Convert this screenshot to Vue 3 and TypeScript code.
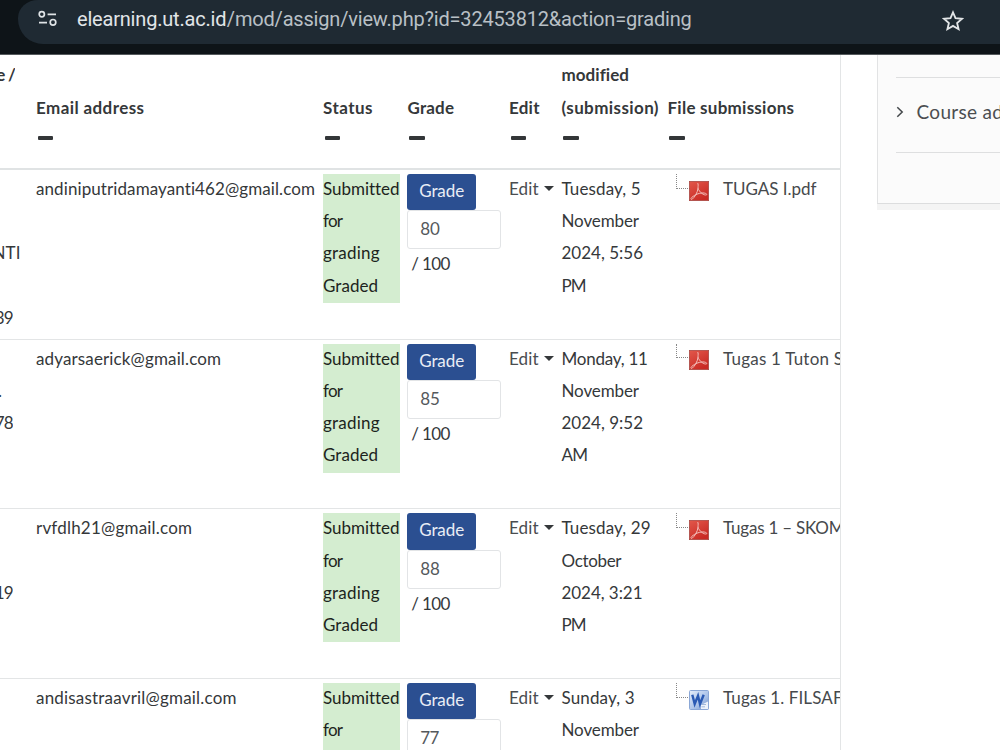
<script setup lang="ts">
import type { Directive } from 'vue'

interface Label {
  t: string
  w: number
}
interface Row {
  name: (Label & { right: number })[]
  email: Label
  grade: Label
  date: Label[]
  icon: 'pdf' | 'word'
  file: Label
}

const L = (t: string, w: number): Label => ({ t, w })
const N = (t: string, w: number, right: number) => ({ t, w, right })

const applyFit = (el: HTMLElement, w: number) => {
  el.style.letterSpacing = '0px'
  const natural = el.getBoundingClientRect().width
  const count = (el.textContent ?? '').length
  if (natural > 0 && count > 1) el.style.letterSpacing = `${(w - natural) / (count - 1)}px`
}
const vFit: Directive<HTMLElement, number> = {
  mounted: (el, binding) => applyFit(el, binding.value),
}

const headers: { lines: Label[] }[] = [
  { lines: [L('', 0), L('Email address', 108)] },
  { lines: [L('', 0), L('Status', 49.5)] },
  { lines: [L('', 0), L('Grade', 46.5)] },
  { lines: [L('', 0), L('Edit', 30.5)] },
  { lines: [L('modified', 67.5), L('(submission)', 97)] },
  { lines: [L('', 0), L('File submissions', 126.5)] },
]

const status: Label[] = [L('Submitted', 76.5), L('for', 20), L('grading', 56.5), L('Graded', 55)]

const rows: Row[] = [
  {
    name: [N('', 0, 0), N('', 0, 0), N('NTI', 28, 20.5), N('', 0, 0), N('39', 19, 13)],
    email: L('andiniputridamayanti462@gmail.com', 279),
    grade: L('80', 19.5),
    date: [L('Tuesday, 5', 79), L('November', 77.5), L('2024, 5:56', 81.5), L('PM', 25)],
    icon: 'pdf',
    file: L('TUGAS I.pdf', 93.5),
  },
  {
    name: [N('', 0, 0), N('.', 4, 2), N('78', 19, 13)],
    email: L('adyarsaerick@gmail.com', 185),
    grade: L('85', 19.5),
    date: [L('Monday, 11', 86.5), L('November', 77.5), L('2024, 9:52', 81.5), L('AM', 26.5)],
    icon: 'pdf',
    file: L('Tugas 1 Tuton S', 120),
  },
  {
    name: [N('', 0, 0), N('', 0, 0), N('19', 19, 13)],
    email: L('rvfdlh21@gmail.com', 156),
    grade: L('88', 19.5),
    date: [L('Tuesday, 29', 89), L('October', 60), L('2024, 3:21', 81), L('PM', 25)],
    icon: 'pdf',
    file: L('Tugas 1 – SKOM', 121.5),
  },
  {
    name: [],
    email: L('andisastraavril@gmail.com', 200.5),
    grade: L('77', 19),
    date: [L('Sunday, 3', 73), L('November', 77.5)],
    icon: 'word',
    file: L('Tugas 1. FILSAF', 119.5),
  },
]
</script>

<template>
  <div class="screen">
    <header class="browser">
      <div class="pill">
        <svg class="tune" width="20" height="18" viewBox="0 0 20 18">
          <g fill="none" stroke="#dfe3e6" stroke-width="1.7">
            <circle cx="3.8" cy="4.3" r="2.6" />
            <path d="M9.6 4.3H18M1 12.7H9" />
            <circle cx="15" cy="12.3" r="2.8" />
          </g>
        </svg>
        <div class="url">
          <span v-fit="149.5" class="fit host">elearning.ut.ac.id</span><span v-fit="465" class="fit path">/mod/assign/view.php?id=32453812&amp;action=grading</span>
        </div>
        <svg class="star" width="22" height="22" viewBox="0 0 22 22">
          <path
            d="M11 2.3 13.5 8.2 20 8.8 15.1 13 16.6 19.2 11 15.9 5.4 19.2 6.9 13 2 8.8 8.5 8.2Z"
            fill="none"
            stroke="#e3e6e8"
            stroke-width="1.8"
          />
        </svg>
      </div>
    </header>

    <main class="page">
      <section class="table">
        <div class="grid head">
          <div class="name">
            <div class="line clip first"><span v-fit="19.5" class="fit">e /</span></div>
          </div>
          <div v-for="(h, i) in headers" :key="i" class="cell">
            <div v-for="(l, j) in h.lines" :key="j" class="line">
              <span v-fit="l.w" class="fit">{{ l.t }}</span>
            </div>
            <div class="minus"></div>
          </div>
        </div>

        <div v-for="(r, i) in rows" :key="i" class="grid row">
          <div class="name">
            <div v-for="(l, j) in r.name" :key="j" class="line clip" :style="{ width: l.right + 'px' }">
              <span v-fit="l.w" class="fit">{{ l.t }}</span>
            </div>
          </div>
          <div class="cell">
            <div class="line"><span v-fit="r.email.w" class="fit">{{ r.email.t }}</span></div>
          </div>
          <div class="cell">
            <div class="status">
              <div v-for="s in status" :key="s.t" class="line">
                <span v-fit="s.w" class="fit">{{ s.t }}</span>
              </div>
            </div>
          </div>
          <div class="cell grade">
            <div class="button"><span v-fit="45" class="fit">Grade</span></div>
            <div class="input"><span v-fit="r.grade.w" class="fit">{{ r.grade.t }}</span></div>
            <div class="line max"><span v-fit="39" class="fit">/ 100</span></div>
          </div>
          <div class="cell">
            <div class="line edit">
              <span v-fit="29.5" class="fit">Edit</span>
              <i class="caret"></i>
            </div>
          </div>
          <div class="cell">
            <div v-for="d in r.date" :key="d.t" class="line">
              <span v-fit="d.w" class="fit">{{ d.t }}</span>
            </div>
          </div>
          <div class="cell file">
            <div class="branch"></div>
            <svg v-if="r.icon === 'pdf'" class="icon" width="20" height="20" viewBox="0 0 20 20">
              <defs>
                <linearGradient id="red" x1="0" y1="0" x2="0.6" y2="1">
                  <stop offset="0" stop-color="#e2584b" />
                  <stop offset="1" stop-color="#c92a24" />
                </linearGradient>
              </defs>
              <rect x="0.4" y="0.4" width="19.2" height="19.2" fill="url(#red)" stroke="#a94a45" stroke-width="0.8" />
              <path
                d="M8.4 2C9.6 2.4 9 5.5 9 7.2C8.8 11 5.6 16.5 3.2 18.2C1.6 18.8 1.4 17.6 3 16.2C6 13.6 10 12 13.5 11.9C16.5 11.9 18.7 13.1 17.4 13.9C15.2 14.7 10.2 11.2 9 7.2"
                fill="none"
                stroke="#f3bdb8"
                stroke-width="1"
              />
            </svg>
            <svg v-else class="icon" width="20" height="20" viewBox="0 0 20 20">
              <defs>
                <linearGradient id="blue" x1="0" y1="0" x2="1" y2="1">
                  <stop offset="0" stop-color="#e6eefb" />
                  <stop offset="0.6" stop-color="#a9c1e8" />
                  <stop offset="1" stop-color="#6e8fc6" />
                </linearGradient>
              </defs>
              <rect x="0.5" y="0.5" width="19" height="19" rx="1" fill="url(#blue)" stroke="#8ba7d6" />
              <path d="M12 19V15L19 11.5V19Z" fill="#eef3fb" />
              <path d="M12.5 14.5H17M12.5 16.8H16" stroke="#8fa9d4" stroke-width="0.8" />
              <path d="M3.3 4.8 5.7 14 9 5.8 11 14 14.7 4.8" fill="none" stroke="#2b5ab4" stroke-width="2.4" />
            </svg>
            <div class="line"><span v-fit="r.file.w" class="fit">{{ r.file.t }}</span></div>
          </div>
        </div>
      </section>

      <aside class="side">
        <div class="item">
          <svg width="8" height="12" viewBox="0 0 8 12">
            <path d="M1.3 1.2 6.2 6 1.3 10.8" fill="none" stroke="#43474a" stroke-width="1.5" />
          </svg>
          <span v-fit="86.5" class="fit">Course ad</span>
        </div>
      </aside>
    </main>
  </div>
</template>

<style>
body {
  margin: 0;
  overflow: hidden;
}
</style>

<style scoped>
.screen {
  width: 1000px;
  height: 750px;
  overflow: hidden;
  background: #fff;
  color: #35383a;
  font: 17px Lato, 'Noto Sans', sans-serif;
}
.screen * {
  box-sizing: border-box;
}
.fit {
  display: inline-block;
  flex: none;
  white-space: pre;
  font-variant-ligatures: none;
}
.browser {
  height: 55px;
  padding-left: 18px;
  background: #0e1418;
  border-bottom: 1px solid #555a5d;
}
.pill {
  display: flex;
  width: 1040px;
  height: 44px;
  padding-left: 19.5px;
  background: #1f2a33;
  border-radius: 20px 0 0 25px / 18px 0 0 25px;
}
.tune {
  flex: none;
  margin-top: 10px;
}
.url {
  display: flex;
  width: 855px;
  flex: none;
  margin-left: 19.5px;
  font: 20px/39px Roboto, sans-serif;
}
.host {
  color: #e1e5e8;
}
.path {
  margin-left: 0.5px;
  color: #b9c0c6;
}
.star {
  flex: none;
  margin: 9.5px 0 0 9.5px;
}
.page {
  display: flex;
  align-items: flex-start;
}
.table {
  width: 841px;
  height: 695px;
  flex: none;
  overflow: hidden;
  border-right: 1px solid #e3e5e6;
}
.grid {
  display: grid;
  grid-template-columns: 32px 287px 84.5px 101.5px 52.5px 106px 1fr;
}
.head {
  height: 115px;
  padding-top: 5.4px;
  border-bottom: 2px solid #e0e3e4;
  font-weight: 700;
}
.name {
  overflow: hidden;
}
.cell {
  min-width: 0;
  padding: 0 4px;
}
.line {
  display: flex;
  height: 32.2px;
  line-height: 29px;
  white-space: pre;
}
.clip {
  justify-content: flex-end;
  overflow: hidden;
}
.first {
  width: 15px;
}
.minus {
  width: 15.5px;
  height: 4px;
  margin: 11.2px 0 0 1.9px;
  border-radius: 1px;
  background: #333638;
}
.row {
  height: 169.7px;
  padding-top: 4px;
  border-top: 1px solid #e3e5e6;
}
.head + .row {
  height: 168.8px;
  border-top: 0;
}
.status {
  height: 128.8px;
  background: #d4edd0;
  color: #1d2420;
}
.grade {
  padding-left: 3.8px;
}
.button {
  display: flex;
  justify-content: center;
  width: 68.7px;
  height: 36.3px;
  line-height: 33px;
  border-radius: 3px;
  background: #2b4f91;
  color: #e9edf5;
}
.input {
  width: 94px;
  height: 39px;
  padding-left: 12px;
  border: 1px solid #e2e4e6;
  border-radius: 3px;
  line-height: 36px;
  color: #55595c;
}
.max {
  padding-left: 4px;
  line-height: 30px;
}
.edit {
  color: #4a4d50;
}
.caret {
  flex: none;
  width: 0;
  height: 0;
  margin: 12px 0 0 5.5px;
  border: 5px solid transparent;
  border-top: 5px solid #35383a;
  border-bottom: 0;
}
.file {
  display: flex;
  overflow: hidden;
  padding-right: 0;
  color: #46494c;
}
.branch {
  flex: none;
  width: 13.5px;
  height: 14.5px;
  margin-left: 8.5px;
  border-left: 1px dotted #888;
  border-bottom: 1px dotted #888;
}
.icon {
  flex: none;
  margin: 6.5px 14px 0 -0.5px;
}
.side {
  width: 140px;
  height: 149px;
  flex: none;
  margin-left: 36px;
  padding: 22px 0 0 18px;
  background: #fbfbfb;
  border-left: 1px solid #e2e3e4;
  border-bottom: 1px solid #dcddde;
  box-shadow: 0 6px 0 #f4f4f4;
}
.item {
  display: flex;
  align-items: center;
  height: 76px;
  padding-bottom: 5.5px;
  border: 1px solid #dedfe0;
  border-width: 1px 0;
  gap: 12.5px;
  font-size: 19px;
  line-height: 24px;
  color: #4b4e51;
}
</style>
